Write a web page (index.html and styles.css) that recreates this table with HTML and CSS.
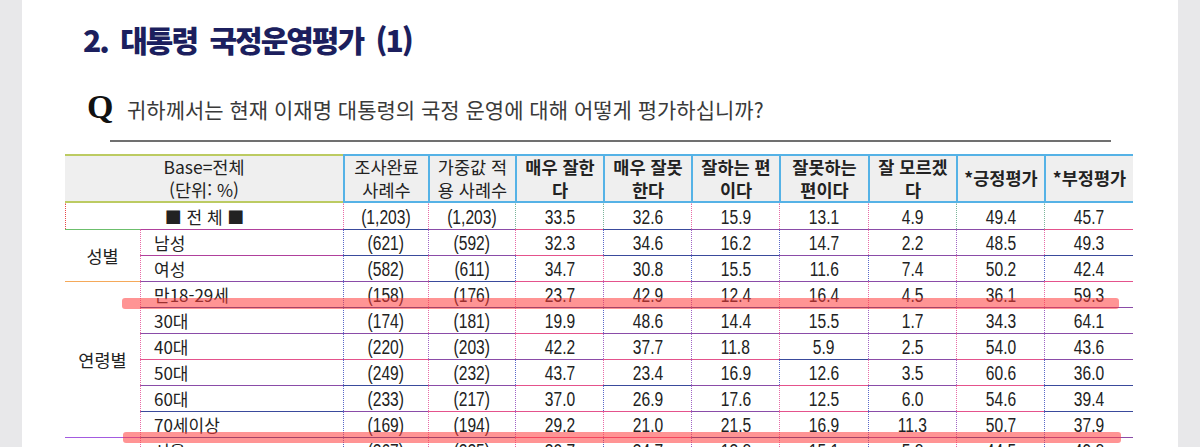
FILE: index.html
```html
<!DOCTYPE html>
<html lang="ko">
<head>
<meta charset="utf-8">
<title>대통령 국정운영평가</title>
<link rel="stylesheet" href="styles.css">
</head>
<body>
<div class="side"></div>
<main class="page">
  <h1 class="title">2. 대통령 국정운영평가 (1)</h1>
  <div class="question">
    <span class="q">Q</span>
    <span class="qtext">귀하께서는 현재 이재명 대통령의 국정 운영에 대해 어떻게 평가하십니까?</span>
  </div>
  <div class="rule"></div>
  <div class="table-wrap">
    <table class="data">
      <colgroup>
        <col class="c-grp"><col class="c-sub">
        <col class="c85"><col class="c87"><col class="c88"><col class="c88"><col class="c88"><col class="c89"><col class="c88"><col class="c88"><col class="c89">
      </colgroup>
      <thead>
        <tr>
          <th colspan="2" class="h-base">Base=전체<br>(단위: %)</th>
          <th>조사완료<br>사례수</th>
          <th>가중값 적<br>용 사례수</th>
          <th class="b">매우 잘한<br>다</th>
          <th class="b">매우 잘못<br>한다</th>
          <th class="b">잘하는 편<br>이다</th>
          <th class="b">잘못하는<br>편이다</th>
          <th class="b">잘 모르겠<br>다</th>
          <th class="b">*긍정평가</th>
          <th class="b">*부정평가</th>
        </tr>
      </thead>
      <tbody>
        <tr>
          <td colspan="2" class="total l-r">■ 전 체 ■</td>
          <td class="n l-k"><span>(1,203)</span></td>
          <td class="n l-k"><span>(1,203)</span></td>
          <td class="n l-g"><span>33.5</span></td>
          <td class="n l-g"><span>32.6</span></td>
          <td class="n l-k"><span>15.9</span></td>
          <td class="n l-k"><span>13.1</span></td>
          <td class="n l-k"><span>4.9</span></td>
          <td class="n l-g"><span>49.4</span></td>
          <td class="n l-g"><span>45.7</span></td>
        </tr>
        <tr>
          <td rowspan="2" class="grp t-g">성별</td>
          <td class="sub t-m l-k">남성</td>
          <td class="n t-b l-b"><span>(621)</span></td>
          <td class="n t-p l-p"><span>(592)</span></td>
          <td class="n t-k l-k"><span>32.3</span></td>
          <td class="n t-b l-b"><span>34.6</span></td>
          <td class="n t-p l-p"><span>16.2</span></td>
          <td class="n t-p l-b"><span>14.7</span></td>
          <td class="n t-p l-k"><span>2.2</span></td>
          <td class="n t-p l-p"><span>48.5</span></td>
          <td class="n t-k l-k"><span>49.3</span></td>
        </tr>
        <tr>
          <td class="sub t-m l-k">여성</td>
          <td class="n t-b l-b"><span>(582)</span></td>
          <td class="n t-p l-k"><span>(611)</span></td>
          <td class="n t-k l-b"><span>34.7</span></td>
          <td class="n t-b l-k"><span>30.8</span></td>
          <td class="n t-b l-b"><span>15.5</span></td>
          <td class="n t-p l-p"><span>11.6</span></td>
          <td class="n t-p l-b"><span>7.4</span></td>
          <td class="n t-p l-k"><span>50.2</span></td>
          <td class="n t-b l-b"><span>42.4</span></td>
        </tr>
        <tr>
          <td rowspan="6" class="grp t-o">연령별</td>
          <td class="sub t-p l-k">만18-29세</td>
          <td class="n t-p l-b"><span>(158)</span></td>
          <td class="n t-b l-k"><span>(176)</span></td>
          <td class="n t-k l-k"><span>23.7</span></td>
          <td class="n t-k l-p"><span>42.9</span></td>
          <td class="n t-p l-p"><span>12.4</span></td>
          <td class="n t-p l-k"><span>16.4</span></td>
          <td class="n t-p l-k"><span>4.5</span></td>
          <td class="n t-p l-p"><span>36.1</span></td>
          <td class="n t-k l-k"><span>59.3</span></td>
        </tr>
        <tr>
          <td class="sub t-b l-k">30대</td>
          <td class="n t-b l-b"><span>(174)</span></td>
          <td class="n t-b l-k"><span>(181)</span></td>
          <td class="n t-b l-k"><span>19.9</span></td>
          <td class="n t-b l-b"><span>48.6</span></td>
          <td class="n t-b l-p"><span>14.4</span></td>
          <td class="n t-b l-k"><span>15.5</span></td>
          <td class="n t-b l-p"><span>1.7</span></td>
          <td class="n t-p l-k"><span>34.3</span></td>
          <td class="n t-p l-p"><span>64.1</span></td>
        </tr>
        <tr>
          <td class="sub t-p l-k">40대</td>
          <td class="n t-p l-b"><span>(220)</span></td>
          <td class="n t-p l-p"><span>(203)</span></td>
          <td class="n t-k l-k"><span>42.2</span></td>
          <td class="n t-p l-p"><span>37.7</span></td>
          <td class="n t-p l-p"><span>11.8</span></td>
          <td class="n t-p l-k"><span>5.9</span></td>
          <td class="n t-p l-p"><span>2.5</span></td>
          <td class="n t-p l-k"><span>54.0</span></td>
          <td class="n t-p l-p"><span>43.6</span></td>
        </tr>
        <tr>
          <td class="sub t-k l-k">50대</td>
          <td class="n t-k l-b"><span>(249)</span></td>
          <td class="n t-p l-k"><span>(232)</span></td>
          <td class="n t-p l-b"><span>43.7</span></td>
          <td class="n t-k l-k"><span>23.4</span></td>
          <td class="n t-k l-p"><span>16.9</span></td>
          <td class="n t-b l-b"><span>12.6</span></td>
          <td class="n t-p l-k"><span>3.5</span></td>
          <td class="n t-k l-p"><span>60.6</span></td>
          <td class="n t-p l-b"><span>36.0</span></td>
        </tr>
        <tr>
          <td class="sub t-p l-k">60대</td>
          <td class="n t-b l-b"><span>(233)</span></td>
          <td class="n t-p l-k"><span>(217)</span></td>
          <td class="n t-k l-p"><span>37.0</span></td>
          <td class="n t-b l-b"><span>26.9</span></td>
          <td class="n t-p l-p"><span>17.6</span></td>
          <td class="n t-k l-k"><span>12.5</span></td>
          <td class="n t-p l-b"><span>6.0</span></td>
          <td class="n t-k l-k"><span>54.6</span></td>
          <td class="n t-b l-b"><span>39.4</span></td>
        </tr>
        <tr>
          <td class="sub t-b l-k">70세이상</td>
          <td class="n t-p l-b"><span>(169)</span></td>
          <td class="n t-k l-k"><span>(194)</span></td>
          <td class="n t-k l-p"><span>29.2</span></td>
          <td class="n t-k l-k"><span>21.0</span></td>
          <td class="n t-p l-p"><span>21.5</span></td>
          <td class="n t-k l-k"><span>16.9</span></td>
          <td class="n t-p l-b"><span>11.3</span></td>
          <td class="n t-k l-p"><span>50.7</span></td>
          <td class="n t-b l-b"><span>37.9</span></td>
        </tr>
        <tr>
          <td class="grp t-l"></td>
          <td class="sub t-b l-k">서울</td>
          <td class="n t-b l-b"><span>(267)</span></td>
          <td class="n t-b l-k"><span>(225)</span></td>
          <td class="n t-k l-k"><span>30.7</span></td>
          <td class="n t-k l-b"><span>34.7</span></td>
          <td class="n t-b l-p"><span>13.8</span></td>
          <td class="n t-b l-k"><span>15.1</span></td>
          <td class="n t-p l-b"><span>5.8</span></td>
          <td class="n t-b l-k"><span>44.5</span></td>
          <td class="n t-p l-b"><span>49.8</span></td>
        </tr>
      </tbody>
    </table>
    <div class="mark mark-1"></div>
    <div class="mark mark-2"></div>
  </div>
</main>
<div class="side"></div>
</body>
</html>
```
FILE: styles.css
```css
html, body {
  margin: 0;
  padding: 0;
  background: #ffffff;
}
body {
  display: flex;
  min-height: 100vh;
  font-family: "Noto Sans CJK KR", "Noto Sans", sans-serif;
  color: #222;
}
.side {
  width: 22px;
  flex: 0 0 22px;
  background: #e8e8ea;
}
.page {
  flex: 1 1 auto;
  background: #fff;
  overflow: hidden;
}
.title {
  margin: 18px 0 0 61px;
  font-size: 30px;
  line-height: 42px;
  font-weight: 900;
  color: #1c1f5e;
  letter-spacing: -2px;
  word-spacing: 6px;
}
.question {
  display: flex;
  align-items: baseline;
  margin: 27px 0 0 65px;
  height: 40px;
}
.q {
  font-family: "Liberation Serif", serif;
  font-weight: 700;
  font-size: 34px;
  line-height: 40px;
  color: #111;
  width: 40px;
}
.qtext {
  font-size: 21px;
  line-height: 40px;
  letter-spacing: 0;
  color: #3a3a3a;
}
.rule {
  margin: 13px 0 0 88px;
  width: 1001px;
  height: 2px;
  background: #707070;
}
.table-wrap {
  position: relative;
  margin: 12px 0 0 43px;
  width: 1068px;
}
.data {
  border-collapse: separate;
  border-spacing: 0;
  table-layout: fixed;
  width: 1068px;
}
.c-grp { width: 75px; }
.c-sub { width: 203px; }
.c85 { width: 85px; }
.c87 { width: 87px; }
.c88 { width: 88px; }
.c89 { width: 89px; }

.data th {
  height: 49px;
  box-sizing: border-box;
  padding: 0;
  background: #efefef;
  font-size: 17.5px;
  line-height: 22.5px;
  font-weight: 400;
  color: #222;
  text-align: center;
  vertical-align: middle;
  border-top: 2px solid #55b2e6;
  border-bottom: 2px solid #55b2e6;
  border-left: 2px solid #55b2e6;
  white-space: nowrap;
}
.data th.b { font-weight: 700; }
.data th.h-base {
  border-left: none;
  border-top-color: #bccb62;
  border-bottom-color: #bccb62;
}
.data td {
  height: 26px;
  box-sizing: border-box;
  padding: 0;
  font-size: 17px;
  line-height: 24px;
  color: #222;
  text-align: center;
  vertical-align: middle;
  white-space: nowrap;
  border-top: 1px solid transparent;
  border-left: 1px dotted transparent;
}
.data td.n {
  font-family: "Liberation Sans", Arial, sans-serif;
  font-size: 19.5px;
}
.data td.n span {
  display: inline-block;
  transform: scaleX(0.8);
}
.data td.sub {
  text-align: left;
  padding-left: 13px;
}
.data td.grp {
  border-left: none;
  font-size: 17.5px;
}
.data td.total { font-size: 17px; }

/* horizontal rule colours */
.t-g { border-top-color: #6cbf6c !important; }
.t-o { border-top-color: #f5a95a !important; }
.t-l { border-top-color: #a35be0 !important; }
.t-m { border-top-color: #b0409c !important; }
.t-p { border-top-color: #8a4ca8 !important; }
.t-b { border-top-color: #3a4a9c !important; }
.t-k { border-top-color: #e4528c !important; }

/* dotted separators */
.l-k { border-left-color: #e86aa6 !important; }
.l-b { border-left-color: #5a68c8 !important; }
.l-p { border-left-color: #a064c4 !important; }
.l-g { border-left-color: #7ab49a !important; }
.l-r { border-left-color: #e84848 !important; }

.mark {
  position: absolute;
  height: 11px;
  border-radius: 3px;
  background: rgba(255, 60, 60, 0.55);
}
.mark-1 { left: 57px; top: 144px; width: 997px; }
.mark-2 { left: 58px; top: 278px; width: 998px; }
```
